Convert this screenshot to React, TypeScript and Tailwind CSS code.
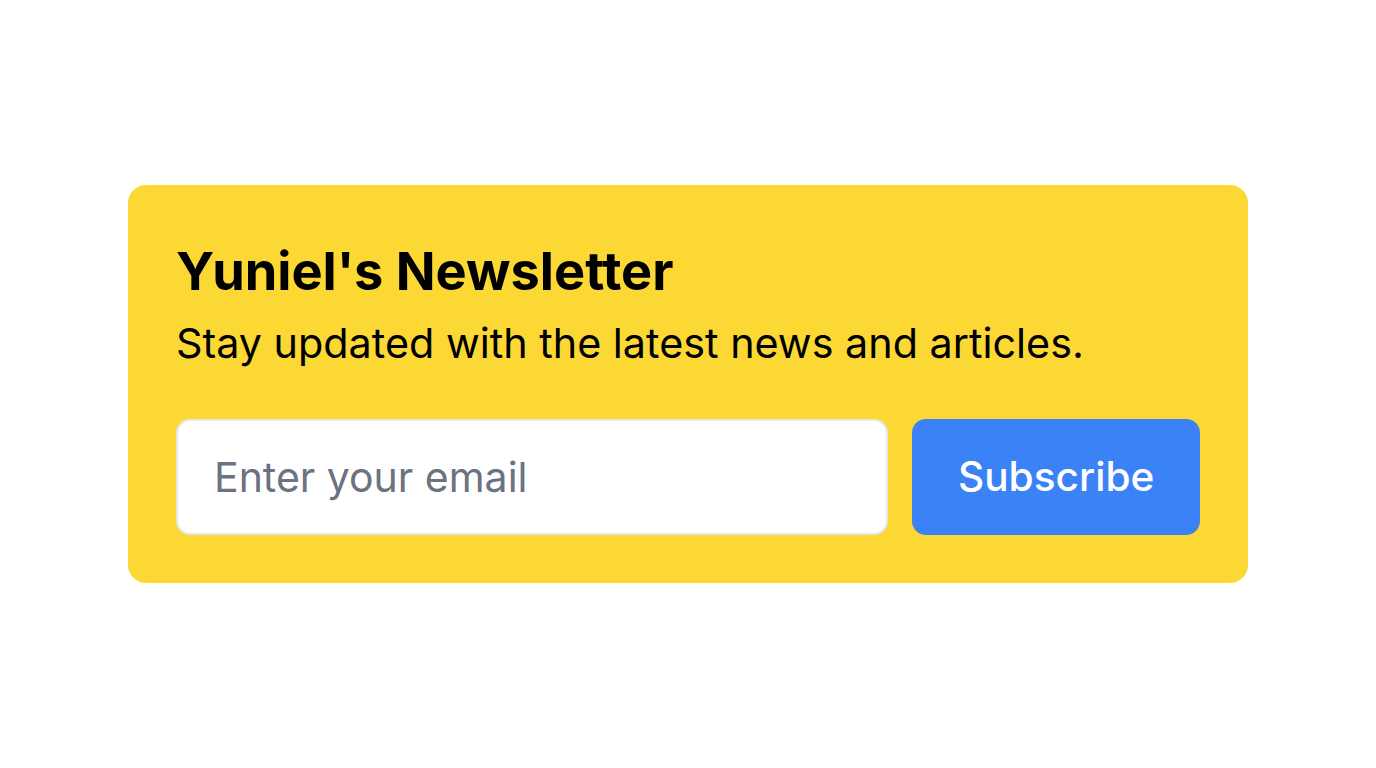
export default function App() {
  return (
    <main className="min-h-screen flex items-center justify-center bg-white" style={{ fontFamily: 'Inter, "Noto Sans", sans-serif' }}>
      <div className="w-[1120px] bg-[#fcd834] rounded-[18px] p-12">
        <h2 className="text-[52.3px] leading-[76px] font-bold text-black">Yuniel's Newsletter</h2>
        <p className="mt-[6px] text-[41.3px] leading-[56px] text-black">Stay updated with the latest news and articles.</p>
        <form className="mt-[48px] flex gap-6" onSubmit={(e) => e.preventDefault()}>
          <input
            type="email"
            placeholder="Enter your email"
            className="flex-1 h-[116px] px-9 text-[41px] bg-white border-2 border-[#e5e7eb] rounded-[14px] placeholder:text-[#6b7280] outline-none"
          />
          <button type="submit" className="h-[116px] px-[46px] bg-[#3b82f6] text-white text-[40.6px] font-medium rounded-[14px]">
            Subscribe
          </button>
        </form>
      </div>
    </main>
  );
}
